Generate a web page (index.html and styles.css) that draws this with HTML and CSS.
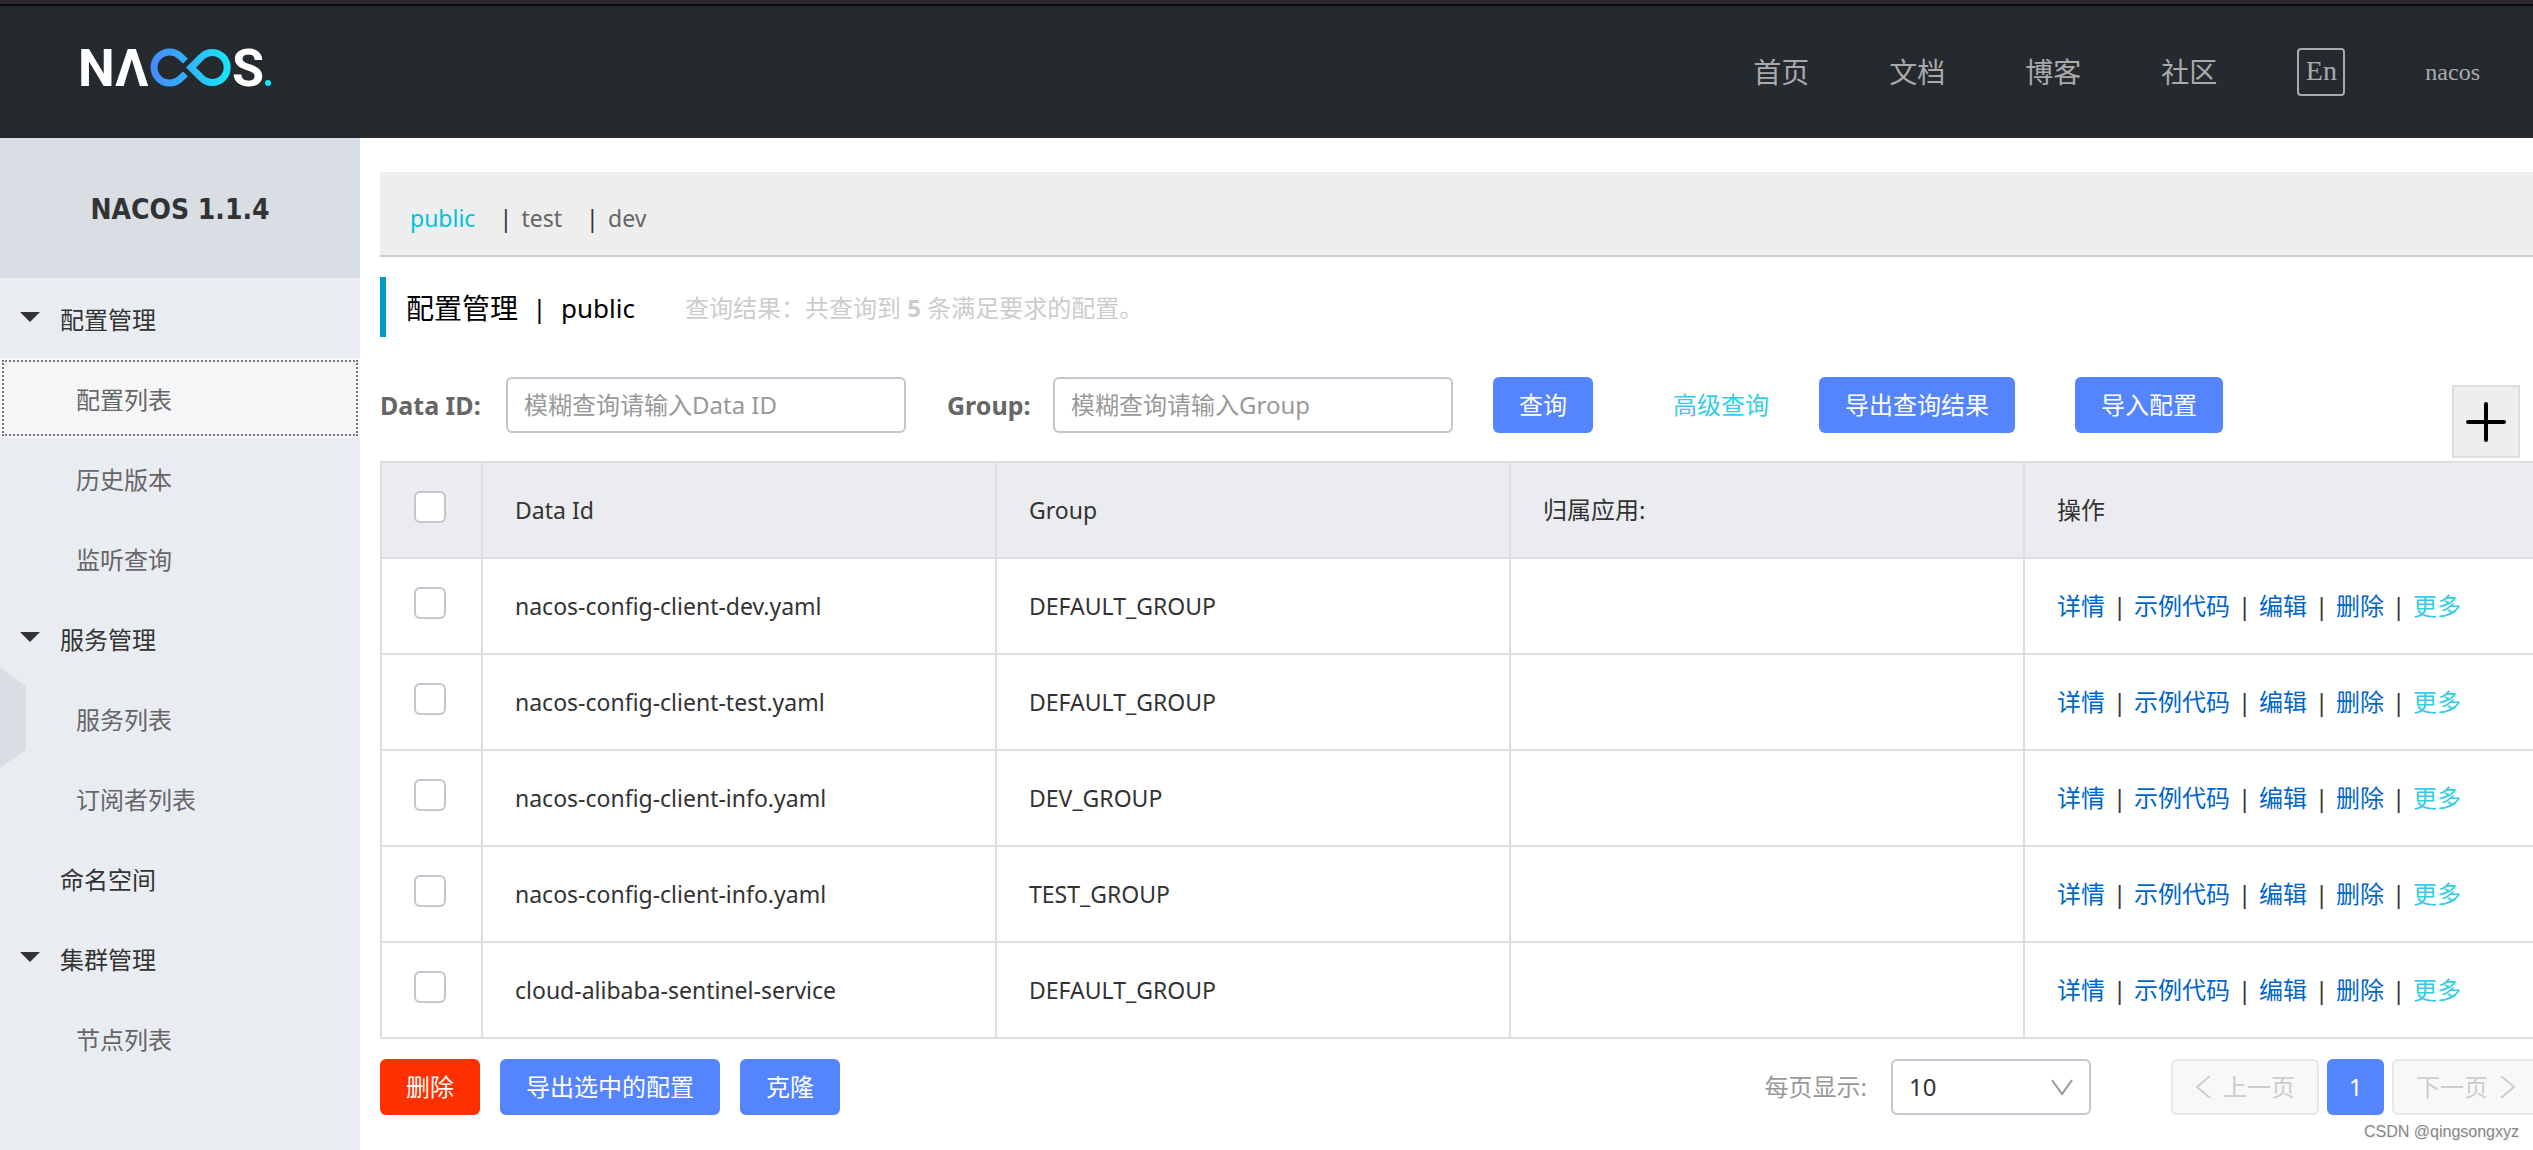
FILE: index.html
```html
<!DOCTYPE html>
<html lang="zh-CN">
<head>
<meta charset="utf-8">
<title>Nacos</title>
<link rel="stylesheet" href="styles.css">
</head>
<body>
<header class="header">
  <a class="logo" href="#" aria-label="Nacos">
    <svg width="190" height="38" viewBox="0 0 190 38">
      <defs>
        <linearGradient id="loop" gradientUnits="userSpaceOnUse" x1="70" y1="0" x2="150" y2="0">
          <stop offset="0" stop-color="#448aff"/>
          <stop offset="1" stop-color="#18e6fa"/>
        </linearGradient>
      </defs>
      <g class="logo-text">
        <text x="-3" y="37">N</text>
        <text x="34" y="37">Λ</text>
        <text x="151" y="37">S</text>
      </g>
      <g fill="none" stroke="url(#loop)" stroke-width="7">
        <path d="M104.500 12 99.500 7.500A15.500 15.500 0 1 0 99.500 29.500L104.500 25"/>
        <path d="M110 18.500 121 7.500A15 15 0 1 1 121 29.500Z"/>
      </g>
      <circle cx="187" cy="34" r="3" fill="#18e6fa"/>
    </svg>
  </a>
  <nav class="nav">
    <a href="#">首页</a>
    <a href="#">文档</a>
    <a href="#">博客</a>
    <a href="#">社区</a>
    <button class="lang" type="button">En</button>
    <a class="user" href="#">nacos</a>
  </nav>
</header>
<div class="body">
  <aside class="sidebar">
    <h1 class="version">NACOS 1.1.4</h1>
    <ul class="menu">
      <li><a class="group open" href="#">配置管理</a></li>
      <li><a class="item active" href="#">配置列表</a></li>
      <li><a class="item" href="#">历史版本</a></li>
      <li><a class="item" href="#">监听查询</a></li>
      <li><a class="group open" href="#">服务管理</a></li>
      <li><a class="item" href="#">服务列表</a></li>
      <li><a class="item" href="#">订阅者列表</a></li>
      <li><a class="group" href="#">命名空间</a></li>
      <li><a class="group open" href="#">集群管理</a></li>
      <li><a class="item" href="#">节点列表</a></li>
    </ul>
    <button class="handle" type="button" aria-label="收起"></button>
  </aside>
  <main class="main">
    <div class="spaces">
      <a class="current" href="#">public</a><span class="bar">|</span><a href="#">test</a><span class="bar">|</span><a href="#">dev</a>
    </div>
    <div class="title">
      <h2>配置管理</h2><span class="title-bar">|</span><span class="title-space">public</span>
      <p class="result">查询结果：共查询到 <strong>5</strong> 条满足要求的配置。</p>
    </div>
    <form class="search">
      <label class="data-label" for="data-id">Data ID:</label>
      <input class="field" id="data-id" type="text" placeholder="模糊查询请输入Data ID">
      <label class="group-label" for="group">Group:</label>
      <input class="field" id="group" type="text" placeholder="模糊查询请输入Group">
      <button class="btn query" type="button">查询</button>
      <a class="advanced" href="#">高级查询</a>
      <button class="btn" type="button">导出查询结果</button>
      <button class="btn import" type="button">导入配置</button>
      <button class="add" type="button" aria-label="新建配置">
        <svg width="40" height="40" viewBox="0 0 40 40"><path d="M2 20H38M20 2V38" stroke="#000" stroke-width="4" stroke-linecap="round"/></svg>
      </button>
    </form>
    <table class="table">
      <thead>
        <tr><th class="check"><input type="checkbox" aria-label="全选"></th><th>Data Id</th><th>Group</th><th class="cjk">归属应用:</th><th class="cjk">操作</th></tr>
      </thead>
      <tbody>
        <tr><td class="check"><input type="checkbox" aria-label="选择"></td><td>nacos-config-client-dev.yaml</td><td>DEFAULT_GROUP</td><td></td><td class="cjk"><div class="actions"><a href="#">详情</a><span>|</span><a href="#">示例代码</a><span>|</span><a href="#">编辑</a><span>|</span><a href="#">删除</a><span>|</span><a class="more" href="#">更多</a></div></td></tr>
        <tr><td class="check"><input type="checkbox" aria-label="选择"></td><td>nacos-config-client-test.yaml</td><td>DEFAULT_GROUP</td><td></td><td class="cjk"><div class="actions"><a href="#">详情</a><span>|</span><a href="#">示例代码</a><span>|</span><a href="#">编辑</a><span>|</span><a href="#">删除</a><span>|</span><a class="more" href="#">更多</a></div></td></tr>
        <tr><td class="check"><input type="checkbox" aria-label="选择"></td><td>nacos-config-client-info.yaml</td><td>DEV_GROUP</td><td></td><td class="cjk"><div class="actions"><a href="#">详情</a><span>|</span><a href="#">示例代码</a><span>|</span><a href="#">编辑</a><span>|</span><a href="#">删除</a><span>|</span><a class="more" href="#">更多</a></div></td></tr>
        <tr><td class="check"><input type="checkbox" aria-label="选择"></td><td>nacos-config-client-info.yaml</td><td>TEST_GROUP</td><td></td><td class="cjk"><div class="actions"><a href="#">详情</a><span>|</span><a href="#">示例代码</a><span>|</span><a href="#">编辑</a><span>|</span><a href="#">删除</a><span>|</span><a class="more" href="#">更多</a></div></td></tr>
        <tr><td class="check"><input type="checkbox" aria-label="选择"></td><td>cloud-alibaba-sentinel-service</td><td>DEFAULT_GROUP</td><td></td><td class="cjk"><div class="actions"><a href="#">详情</a><span>|</span><a href="#">示例代码</a><span>|</span><a href="#">编辑</a><span>|</span><a href="#">删除</a><span>|</span><a class="more" href="#">更多</a></div></td></tr>
      </tbody>
    </table>
    <div class="footer">
      <button class="btn danger" type="button">删除</button>
      <button class="btn" type="button">导出选中的配置</button>
      <button class="btn" type="button">克隆</button>
      <label class="size-label" for="size">每页显示:</label>
      <div class="select">
        <select id="size"><option>10</option><option>20</option></select>
        <svg width="22" height="18" viewBox="0 0 22 18"><path d="M1 1 11 15 21 1" fill="none" stroke="#999" stroke-width="2"/></svg>
      </div>
      <div class="pages">
        <button class="page" type="button" disabled><svg width="16" height="22" viewBox="0 0 16 22"><path d="M15 0 2 11 15 22" fill="none" stroke="#ccc" stroke-width="2"/></svg>上一页</button>
        <button class="page number" type="button">1</button>
        <button class="page" type="button" disabled>下一页<svg width="16" height="22" viewBox="0 0 16 22"><path d="M1 0 14 11 1 22" fill="none" stroke="#ccc" stroke-width="2"/></svg></button>
      </div>
    </div>
  </main>
</div>
<div class="watermark">CSDN @qingsongxyz</div>
</body>
</html>
```
FILE: styles.css
```css
* {
  box-sizing: border-box;
}

body {
  margin: 0;
  min-height: 100vh;
  display: flex;
  flex-direction: column;
  position: relative;
  overflow-x: hidden;
  background: #fff;
  color: #333;
  font: 24px/32px "Noto Sans", "Noto Sans CJK SC", sans-serif;
}

a {
  color: inherit;
  text-decoration: none;
}

button,
input,
select {
  font: inherit;
}

/* Header */
.header {
  display: flex;
  align-items: center;
  justify-content: space-between;
  height: 138px;
  padding: 2px 53px 0 81px;
  border-top: 4px solid #2b2833;
  box-shadow: inset 0 2px #08090a;
  background: #252a2f;
}

.logo {
  padding-bottom: 8px;
}

.logo svg {
  display: block;
  overflow: visible;
}

.logo-text {
  fill: #fff;
  font: 700 52px Roboto, sans-serif;
}

.nav {
  display: flex;
  align-items: center;
  gap: 80px;
  color: #aaa;
  font-size: 28px;
}

.lang {
  width: 48px;
  height: 48px;
  padding: 0 0 2px;
  border: 2px solid #aaa;
  border-radius: 4px;
  background: none;
  color: inherit;
  font: 28px "Liberation Serif", serif;
}

.user {
  font: 24px/32px "Liberation Serif", serif;
}

/* Sidebar */
.body {
  flex: 1;
  display: flex;
}

.sidebar {
  position: relative;
  flex: none;
  width: 360px;
  background: #e9edf2;
}

.version {
  margin: 0;
  padding-top: 4px;
  background: #d9dee4;
  text-align: center;
  font: 700 28px/136px "DejaVu Sans Condensed", sans-serif;
}

.menu {
  margin: 0;
  padding: 0;
  list-style: none;
}

.menu a {
  display: flex;
  align-items: center;
  height: 80px;
  padding-top: 4px;
}

.group {
  padding-left: 60px;
}

.open {
  padding-left: 20px;
}

.open::before {
  content: "";
  margin: 0 20px 6px 0;
  border: 10px solid transparent;
  border-top-color: #333;
  border-bottom: 0;
}

.item {
  padding-left: 76px;
  color: #666;
}

.active {
  background: #f4f6f8;
  outline: 2px dotted #777;
  outline-offset: -4px;
}

.handle {
  position: absolute;
  left: 0;
  top: 530px;
  width: 26px;
  height: 100px;
  border: 0;
  background: #d9dee4;
  clip-path: polygon(0 0, 100% 18%, 100% 82%, 0 100%);
}

/* Main */
.main {
  flex: 1;
  min-width: 0;
  overflow: hidden;
  padding: 34px 0 34px 20px;
}

.spaces {
  display: flex;
  padding: 30px 30px 21px;
  border-bottom: 2px solid #ccc;
  background: #eee;
  color: #666;
  font-size: 23px;
}

.current {
  color: #00c1de;
}

.bar {
  width: 22px;
  margin-left: 24px;
  color: #333;
}

.title {
  display: flex;
  align-items: center;
  height: 60px;
  margin-top: 20px;
  padding: 2px 0 0 20px;
  border-left: 6px solid #09c;
  color: #000;
}

.title h2 {
  margin: 0;
  font-size: 28px;
  font-weight: 400;
}

.title-bar {
  width: 43px;
  text-align: center;
  font-size: 26px;
}

.title-space {
  font-size: 26px;
}

.result {
  margin: 0 0 0 50px;
  color: #ccc;
}

/* Search form */
.search {
  display: flex;
  align-items: flex-start;
  height: 84px;
  margin-top: 40px;
  line-height: 56px;
}

.search label {
  flex: none;
  color: #666;
  font-size: 25px;
  font-weight: 700;
}

.data-label {
  width: 126px;
}

.group-label {
  width: 106px;
  margin-left: 41px;
}

.field {
  width: 400px;
  height: 56px;
  padding: 0 16px;
  border: 2px solid #c4c6cf;
  border-radius: 6px;
}

.field::placeholder {
  color: #999;
}

.btn {
  flex: none;
  height: 56px;
  padding: 0 26px;
  border: 0;
  border-radius: 6px;
  background: #5584ff;
  color: #fff;
}

.query {
  margin-left: 40px;
}

.advanced {
  flex: none;
  margin: 0 50px 0 80px;
  color: #33cde5;
}

.import {
  margin-left: 60px;
}

.add {
  display: grid;
  place-items: center;
  width: 68px;
  height: 73px;
  margin: 8px 13px 0 auto;
  padding: 0;
  border: 2px solid #ddd;
  background: #eee;
}

/* Table */
.table {
  width: calc(100% + 6px);
  table-layout: fixed;
  border-collapse: collapse;
  font-size: 23px;
}

.table th,
.table td {
  height: 96px;
  padding: 0 0 0 32px;
  border: 2px solid #dcdee3;
  text-align: left;
  font-weight: 400;
}

.table th {
  background: #ebecf0;
}

.table .check {
  width: 101px;
  padding: 0 3px 6px 0;
  text-align: center;
}

.table .cjk {
  font-size: 24px;
}

.check input {
  appearance: none;
  display: block;
  width: 32px;
  height: 32px;
  margin: 0 auto;
  border: 2px solid #c4c6cf;
  border-radius: 6px;
  background: #fff;
}

.actions {
  display: flex;
  color: #06c;
}

.actions span {
  width: 29px;
  color: #333;
  text-align: center;
}

.actions .more {
  color: #33cde5;
}

/* Footer */
.footer {
  display: flex;
  gap: 20px;
  margin: 20px -7px 0 0;
}

.danger {
  background: #ff3000;
}

.size-label {
  margin: 0 4px 0 auto;
  color: #999;
  line-height: 56px;
}

.select {
  position: relative;
  width: 200px;
}

.select select {
  appearance: none;
  width: 100%;
  height: 56px;
  padding: 0 16px;
  border: 2px solid #c4c6cf;
  border-radius: 6px;
  background: #fff;
  color: #333;
}

.select svg {
  position: absolute;
  right: 18px;
  top: 20px;
  pointer-events: none;
}

.pages {
  display: flex;
  gap: 8px;
  margin-left: 60px;
}

.page {
  display: flex;
  align-items: center;
  justify-content: center;
  gap: 12px;
  width: 148px;
  height: 56px;
  padding: 0;
  border: 2px solid #e6e7eb;
  border-radius: 6px;
  background: #f7f8fa;
  color: #ccc;
}

.number {
  width: 57px;
  border: 0;
  background: #5584ff;
  color: #fff;
}

.watermark {
  position: absolute;
  right: 14px;
  bottom: 6px;
  color: #888;
  font: 16px/24px "Liberation Sans", sans-serif;
  text-shadow: 1px 1px #eee;
}
```
